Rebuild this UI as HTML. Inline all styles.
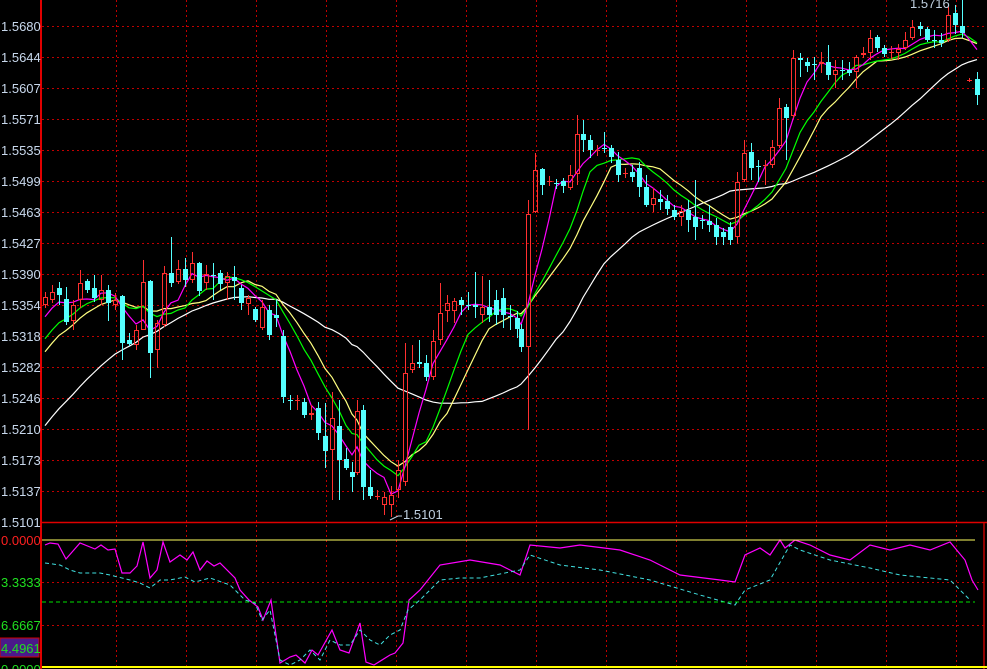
<!DOCTYPE html>
<html><head><meta charset="utf-8">
<style>
html,body{margin:0;padding:0;background:#000;width:987px;height:669px;overflow:hidden}
svg{display:block}
text{font-family:"Liberation Sans",sans-serif;font-size:13px}
</style></head>
<body>
<svg id="s" width="987" height="669" xmlns="http://www.w3.org/2000/svg">
<rect width="987" height="669" fill="#000"/>
<g id="grid"></g>
<g id="ma"></g>
<g id="c"></g>
<g id="low"></g>
<line x1="41" y1="0" x2="41" y2="669" stroke="#e00000" stroke-width="2"/>
<line x1="41" y1="522.5" x2="987" y2="522.5" stroke="#e00000" stroke-width="1.5"/>
<line x1="984" y1="523" x2="984" y2="669" stroke="#c00000" stroke-width="1.5"/>
<line x1="42" y1="540" x2="975" y2="540" stroke="#ffff60" stroke-width="1"/>
<line x1="42" y1="667" x2="987" y2="667" stroke="#ffff00" stroke-width="2"/>
<line x1="42" y1="602" x2="975" y2="602" stroke="#00e000" stroke-width="1" stroke-dasharray="4,3"/>
<g id="lab"></g>
<text x="910" y="8" fill="#c0d0e0">1.5716</text>
<polyline points="390,520 398,516 402,516" fill="none" stroke="#c0d0e0"/>
<text x="403" y="519" fill="#c0d0e0">1.5101</text>
<rect x="0" y="638" width="39" height="19" fill="#4a1a8a" stroke="#d00000"/>
<text x="1" y="545" fill="#ff2020">0.0000</text>
<text x="1" y="587" fill="#20e020">3.3333</text>
<text x="1" y="630" fill="#20e020">6.6667</text>
<text x="1" y="653" fill="#20e020">4.4961</text>
<text x="1" y="674" fill="#20e020">0.0000</text>
</svg>
<script>
var NS="http://www.w3.org/2000/svg";
function el(p,t,a){var e=document.createElementNS(NS,t);for(var k in a)e.setAttribute(k,a[k]);document.getElementById(p).appendChild(e);return e;}
// grid
var labels=["1.5680","1.5644","1.5607","1.5571","1.5535","1.5499","1.5463","1.5427","1.5390","1.5354","1.5318","1.5282","1.5246","1.5210","1.5173","1.5137","1.5101"];
for(var i=0;i<17;i++){var y=26+i*31; if(i<16) el("grid","line",{x1:42,y1:y+0.5,x2:987,y2:y+0.5,stroke:"#c00000","stroke-dasharray":"2,3"});
 var t=el("lab","text",{x:1,y:y+5,fill:"#c8d8ec"});t.textContent=labels[i];}
for(var x=116;x<987;x+=70){el("grid","line",{x1:x+0.5,y1:0,x2:x+0.5,y2:669,stroke:"#c00000","stroke-dasharray":"2,3"});}
[582,625].forEach(function(y){el("grid","line",{x1:42,y1:y+.5,x2:987,y2:y+.5,stroke:"#c00000","stroke-dasharray":"2,3"});});
// candles [x, open, close, high, low]  (pixel y)
var C=[[45,305,297,292,308],[52,300,292,285,303],[59,288,295,282,305],[66,299,322,287,325],[73,321,305,300,330],[80,300,283,270,308],[87,281,290,279,293],[94,288,298,275,302],[101,300,290,275,305],[108,290,303,285,321],[115,305,300,293,310],[122,296,343,295,360],[129,340,344,333,346],[136,345,330,325,350],[143,330,282,260,330],[150,281,353,280,378],[157,350,323,320,368],[164,325,273,266,327],[171,273,283,237,287],[178,282,269,260,284],[185,269,280,258,287],[192,280,263,252,283],[199,263,291,262,296],[206,283,274,265,290],[213,275,276,263,300],[220,273,284,270,290],[227,283,276,272,300],[234,277,281,266,300],[241,288,303,285,310],[248,304,298,295,315],[255,309,320,307,322],[262,328,307,300,330],[269,310,335,305,340],[276,315,318,300,327],[283,336,397,330,403],[290,400,400,395,410],[297,400,400,395,410],[304,402,415,398,418],[311,415,413,405,420],[318,408,433,402,440],[325,436,451,403,468],[332,450,418,392,500],[339,426,460,400,500],[346,459,468,448,470],[352,472,477,462,492],[357,473,411,400,475],[363,410,487,405,500],[370,487,496,470,499],[377,496,496,490,500],[384,505,497,492,515],[391,505,495,486,517],[398,490,470,460,498],[405,482,373,343,486],[412,370,363,345,373],[419,362,364,340,368],[426,363,377,355,381],[433,377,341,330,380],[440,340,313,283,345],[447,311,303,295,322],[454,311,301,298,323],[461,300,305,297,315],[468,305,305,292,310],[475,305,307,272,318],[482,315,307,276,323],[489,307,315,280,322],[496,300,315,290,325],[503,298,315,288,328],[510,316,316,305,330],[517,318,329,311,338],[521,329,347,324,352],[528,347,214,200,430],[535,212,170,153,213],[542,169,185,168,195],[549,181,181,176,186],[556,183,183,179,189],[563,181,186,178,193],[570,188,175,165,190],[577,174,134,115,185],[583,134,140,120,152],[590,140,150,135,158],[597,150,150,145,156],[604,148,148,132,153],[611,148,157,145,163],[618,160,175,152,182],[625,173,173,168,178],[632,172,177,165,182],[639,168,187,162,197],[646,187,205,175,207],[653,205,198,188,212],[660,199,202,190,210],[667,201,209,195,215],[674,210,217,205,220],[681,217,211,205,226],[688,210,220,200,232],[695,217,227,180,240],[702,220,220,215,229],[709,221,225,205,232],[716,225,237,218,245],[723,232,237,228,245],[730,227,240,222,245],[737,237,182,172,244],[744,180,153,140,182],[751,152,168,143,180],[758,166,166,160,182],[765,165,165,160,185],[772,165,147,140,168],[779,146,108,98,148],[786,107,118,104,160],[793,116,58,50,118],[800,58,60,53,77],[807,62,66,58,72],[814,64,64,57,80],[821,64,62,52,73],[828,62,75,45,80],[835,75,70,60,88],[842,70,70,60,80],[849,70,73,62,76],[856,72,57,55,88],[863,55,53,47,58],[870,53,38,30,60],[877,37,48,35,52],[884,48,54,45,57],[891,52,52,46,60],[898,53,49,44,60],[905,48,40,32,50],[912,38,27,20,40],[920,26,29,22,36],[927,29,40,27,42],[934,40,40,30,48],[941,40,43,33,47],[948,40,15,7,42],[955,13,25,5,34],[962,26,33,0,38],[969,80,80,78,82],[977,79,95,72,105]];
var closes=[];
for(var k=0;k<30;k++) closes.push(560-k*(260/30));
C.forEach(function(c){closes.push(c[2]);});
function ma(n,col){var pts=[];for(var i=30;i<closes.length;i++){var s=0;for(var j=0;j<n;j++)s+=closes[i-j];pts.push(C[i-30][0]+","+(s/n).toFixed(1));}
 el("ma","polyline",{points:pts.join(" "),fill:"none",stroke:col,"stroke-width":1.2});}
ma(30,"#ffffff");ma(13,"#ffff80");ma(10,"#00ff00");ma(5,"#ff00ff");
C.forEach(function(c){var x=c[0],o=c[1],cl=c[2],up=cl<o||(cl==o&&c[0]%2),top=Math.min(o,cl),bot=Math.max(o,cl);
 var col=up?"#ff3030":"#55ffff";
 el("c","line",{x1:x+.5,y1:c[3],x2:x+.5,y2:top,stroke:col});
 el("c","line",{x1:x+.5,y1:bot,x2:x+.5,y2:c[4],stroke:col});
 if(bot-top<2){el("c","line",{x1:x-2,y1:top+.5,x2:x+3,y2:top+.5,stroke:col});}
 else if(up) el("c","rect",{x:x-1.5,y:top+.5,width:4,height:bot-top-1,fill:"none",stroke:col});
 else el("c","rect",{x:x-2,y:top,width:5,height:bot-top,fill:col});
});
var mg="45,545 50,543 58,544 66,559 80,543 95,549 101,545 108,550 115,549 122,573 130,573 137,566 143,542 150,578 157,570 163,542 170,562 180,555 187,560 193,552 200,570 207,561 214,566 220,563 235,578 240,590 249,600 258,607 263,620 271,600 280,663 290,657 296,655 305,663 312,650 318,655 332,630 340,650 349,653 360,623 366,662 374,665 390,655 395,653 403,643 409,600 420,590 440,565 470,560 500,565 520,575 530,545 560,548 580,545 620,550 650,560 680,575 720,580 735,582 745,555 760,548 770,555 780,540 785,548 795,540 810,545 830,555 850,560 870,545 890,550 910,545 930,550 950,542 965,560 972,580 978,590";
el("low","polyline",{points:mg,fill:"none",stroke:"#ff00ff","stroke-width":1.2});
var cy="45,563 60,565 70,570 80,573 100,573 110,575 130,580 140,583 150,588 160,580 170,580 185,577 195,582 210,578 230,585 245,600 255,603 262,620 270,610 280,660 290,665 300,660 310,650 320,660 330,640 340,645 350,645 360,630 370,640 380,645 390,635 400,630 408,610 420,600 440,580 460,578 480,578 520,570 530,555 560,565 600,570 650,580 700,595 735,605 745,590 770,580 790,545 800,550 830,560 870,568 900,575 950,580 970,600";
el("low","polyline",{points:cy,fill:"none",stroke:"#40e0e0","stroke-width":1,"stroke-dasharray":"4,3"});
</script>
</body></html>
